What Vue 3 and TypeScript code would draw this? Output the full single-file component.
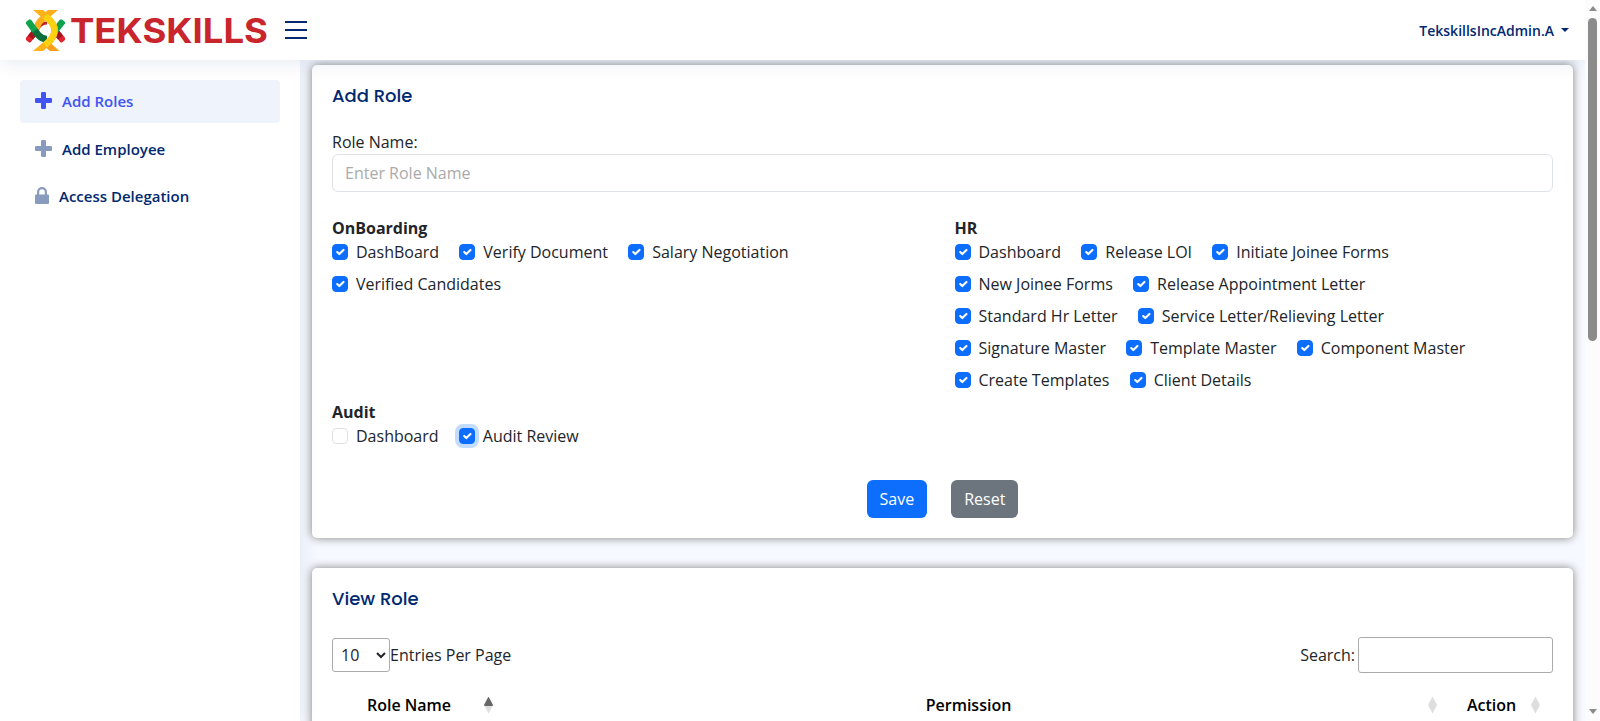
<script setup lang="ts">
import { ref } from 'vue'

interface Permission {
  label: string
  checked: boolean
  focused?: boolean
}
interface Group {
  title: string
  items: Permission[]
}

const on = (label: string): Permission => ({ label, checked: true })

const groups = ref<Group[]>([
  {
    title: 'OnBoarding',
    items: ['DashBoard', 'Verify Document', 'Salary Negotiation', 'Verified Candidates'].map(on),
  },
  {
    title: 'HR',
    items: [
      'Dashboard', 'Release LOI', 'Initiate Joinee Forms', 'New Joinee Forms',
      'Release Appointment Letter', 'Standard Hr Letter', 'Service Letter/Relieving Letter',
      'Signature Master', 'Template Master', 'Component Master', 'Create Templates', 'Client Details',
    ].map(on),
  },
  {
    title: 'Audit',
    items: [
      { label: 'Dashboard', checked: false },
      { label: 'Audit Review', checked: true, focused: true },
    ],
  },
])

const menu = [
  { label: 'Add Roles', icon: 'plus', active: true },
  { label: 'Add Employee', icon: 'plus', active: false },
  { label: 'Access Delegation', icon: 'lock', active: false },
]

const roleName = ref('')
const search = ref('')
const pageSize = ref('10')
</script>

<template>
  <div class="window">
    <div class="page">
      <header class="header">
        <div class="brand">
          <svg class="emblem" viewBox="2 1 39 41" width="39" height="41" fill="none" stroke-width="6.5">
            <defs>
              <clipPath id="sides"><path d="M2 13 5 10.500H38L41 13V31L38 33.500H5L2 31z" /></clipPath>
            </defs>
            <g clip-path="url(#sides)">
              <path d="M1 35 11 23M42 35 32 23" stroke="#e0232e" />
              <path d="M6.500 28.500 11 23M36.500 28.500 32 23" stroke="#a3161f" />
              <path d="M42 8 31 22" stroke="#0fa34b" />
            </g>
            <path d="M14.500 18.500Q18 14 23 14" stroke="#c0202a" stroke-width="3" />
            <path d="M36 -5 19 9.500Q13 14 12.500 21" stroke="#fbae1c" />
            <path clip-path="url(#sides)" d="M1 8 12 23Q16 30 22 30" stroke="#0fa34b" />
            <path d="M11 21.500 13 24.500Q17 30 23 30" stroke="#0c6e3a" />
            <path d="M36 47 24 36" stroke="#f7a01b" />
            <path d="M7 -5 24 9.500Q30.500 15 30.500 21.500Q30.500 28 24 33.500L7 48" stroke="#fcb31a" />
            <path d="M21 7 24 9.500Q30.500 15 30.500 21.500Q30.500 28 24 33.500L21 36" stroke="#fdd010" />
          </svg>
          <svg class="wordmark" viewBox="0 0 200 32" width="200" height="32">
            <text x="1" y="29" textLength="198" lengthAdjust="spacingAndGlyphs">TEKSKILLS</text>
          </svg>
          <svg class="burger" viewBox="0 0 22 18" width="22" height="18">
            <path d="M0 1h22M0 9h22M0 17h22" stroke="#012970" stroke-width="2" />
          </svg>
        </div>
        <div class="user">TekskillsIncAdmin.A<i class="caret"></i></div>
      </header>

      <div class="body">
        <aside class="sidebar">
          <a v-for="m in menu" :key="m.label" class="nav-link" :class="[m.icon, { active: m.active }]">
            <svg v-if="m.icon === 'plus'" viewBox="0 0 17 17" width="17" height="17">
              <path d="M6 1.200Q6 0 7.200 0h2.600Q11 0 11 1.200V6h4.800Q17 6 17 7.200v2.600Q17 11 15.800 11H11v4.800Q11 17 9.800 17H7.200Q6 17 6 15.800V11H1.200Q0 11 0 9.800V7.200Q0 6 1.200 6H6z" fill="currentColor" />
            </svg>
            <svg v-else viewBox="0 0 14 17" width="14" height="17">
              <path d="M12.800 7.400H12V5A5 5 0 0 0 2 5v2.400h-.8Q0 7.400 0 8.600v7.200Q0 17 1.200 17h11.600q1.200 0 1.200-1.200V8.600q0-1.200-1.200-1.200zM4.200 7.400V5a2.800 2.800 0 0 1 5.600 0v2.400z" fill="currentColor" />
            </svg>
            <span>{{ m.label }}</span>
          </a>
        </aside>

        <main class="main">
          <section class="card">
            <h5 class="card-title">Add Role</h5>
            <label class="field-label">Role Name:</label>
            <input v-model="roleName" class="form-control" type="text" placeholder="Enter Role Name" />
            <div class="groups">
              <div v-for="g in groups" :key="g.title" class="group">
                <div class="group-title">{{ g.title }}</div>
                <div class="checks">
                  <label v-for="p in g.items" :key="p.label" class="check" @click="p.checked = !p.checked">
                    <span class="box" :class="{ checked: p.checked, focused: p.focused }">
                      <svg v-if="p.checked" viewBox="0 0 20 20" width="14" height="14">
                        <path d="m6 10 3 3 6-6" fill="none" stroke="#fff" stroke-width="3" stroke-linecap="round" stroke-linejoin="round" />
                      </svg>
                    </span>
                    <span>{{ p.label }}</span>
                  </label>
                </div>
              </div>
            </div>
            <div class="actions">
              <button class="btn save">Save</button>
              <button class="btn reset">Reset</button>
            </div>
          </section>

          <section class="card list">
            <h5 class="card-title">View Role</h5>
            <div class="toolbar">
              <div class="length">
                <select v-model="pageSize">
                  <option>10</option>
                  <option>25</option>
                  <option>50</option>
                </select>
                <span>Entries Per Page</span>
              </div>
              <div class="search">
                <span>Search:</span>
                <input v-model="search" type="search" />
              </div>
            </div>
            <div class="thead">
              <div class="th"><span>Role Name</span><i class="sort asc"></i></div>
              <div class="th"><span>Permission</span><i class="sort"></i></div>
              <div class="th"><span>Action</span><i class="sort"></i></div>
            </div>
          </section>
        </main>
      </div>
    </div>

    <div class="scrollbar">
      <i class="up"></i>
      <i class="thumb"></i>
      <i class="down"></i>
    </div>
  </div>
</template>

<style>
body {
  background: #f6f9ff;
  overflow: hidden;
}
</style>

<style scoped>
* {
  box-sizing: border-box;
}
.window {
  display: flex;
  width: 1600px;
  height: 721px;
  overflow: hidden;
  background: #f6f9ff;
  font: 16px/24px "Open Sans", "Noto Sans", sans-serif;
  color: #212529;
}
.page {
  width: 1585px;
  height: 721px;
  display: flex;
  flex-direction: column;
  overflow: hidden;
}
.header {
  position: relative;
  z-index: 3;
  flex: none;
  height: 60px;
  display: flex;
  align-items: center;
  justify-content: space-between;
  padding: 0 16px 0 26px;
  background: #fff;
  box-shadow: 0 2px 20px rgba(1, 41, 112, 0.1);
}
.brand {
  display: flex;
  align-items: center;
}
.emblem {
  margin-top: 1px;
}
.wordmark {
  margin: 0 16px 0 4px;
  overflow: visible;
}
.wordmark text {
  font: 700 34px "Inter", sans-serif;
  fill: #c9252c;
}
.user {
  display: flex;
  align-items: center;
  padding-top: 1px;
  font-size: 14px;
  font-weight: 600;
  color: #012970;
}
.caret {
  margin: -1px 0 0 7px;
  border: 4px solid transparent;
  border-top-color: #012970;
  border-bottom: 0;
}
.body {
  flex: 1;
  min-height: 0;
  display: flex;
}
.sidebar {
  position: relative;
  z-index: 2;
  flex: none;
  width: 300px;
  padding: 20px;
  background: #fff;
  box-shadow: 0 0 20px rgba(1, 41, 112, 0.1);
}
.nav-link {
  display: flex;
  align-items: center;
  height: 42.500px;
  margin-bottom: 5px;
  padding: 0 15px;
  border-radius: 4px;
  font-size: 15px;
  font-weight: 600;
  color: #012970;
}
.nav-link svg {
  margin: -1px 10px 0 0;
  color: #899bbd;
}
.nav-link.active {
  background: #eef3fc;
  color: #4154f1;
}
.nav-link.active svg {
  color: #4154f1;
}
.main {
  flex: 1;
  min-width: 0;
  padding: 5px 12px 0;
}
.card {
  padding: 20px;
  background: #fff;
  border-radius: 5px;
  box-shadow: 0 0 10px gray;
  margin-bottom: 30px;
}
.card-title {
  height: 45px;
  margin: 0;
  font: 500 18px/21.600px "Poppins", "Inter", sans-serif;
  color: #012970;
}
.field-label {
  display: block;
}
.form-control {
  display: block;
  width: 100%;
  height: 38px;
  padding: 6px 12px;
  border: 1px solid #dee2e6;
  border-radius: 6px;
  background: #fff;
  font: inherit;
  color: inherit;
}
.form-control::placeholder {
  color: #aaa;
  opacity: 1;
}
.groups {
  display: grid;
  grid-template-columns: 1fr 1fr;
  column-gap: 24px;
  margin-top: 24px;
}
.group-title {
  font-weight: 700;
}
.checks {
  display: flex;
  flex-wrap: wrap;
}
.check {
  display: flex;
  height: 32px;
  margin-right: 20.200px;
  white-space: nowrap;
}
.box {
  width: 16px;
  height: 16px;
  margin: 4px 8px 0 0;
  border: 1px solid #dee2e6;
  border-radius: 4px;
}
.box svg {
  display: block;
}
.box.checked {
  background: #0d6efd;
  border-color: #0d6efd;
}
.box.focused {
  box-shadow: 0 0 0 4px rgba(13, 110, 253, 0.25);
}
.actions {
  display: flex;
  justify-content: center;
  gap: 24px;
  margin-top: 24px;
}
.btn {
  height: 38px;
  padding: 0 13px;
  border: 0;
  border-radius: 6px;
  font: inherit;
  color: #fff;
}
.save {
  background: #0d6efd;
}
.reset {
  background: #6c757d;
}
.list {
  height: 400px;
}
.toolbar {
  display: flex;
  justify-content: space-between;
  align-items: center;
  height: 36px;
  margin-top: 4px;
}
.length,
.search {
  display: flex;
  align-items: center;
}
.length select {
  width: 58px;
  height: 34px;
  padding: 4px;
  border: 1px solid #aaa;
  border-radius: 3px;
  background: transparent;
  font: inherit;
  color: inherit;
}
.search input {
  width: 195px;
  height: 36px;
  margin-left: 3px;
  padding: 5px;
  border: 1px solid #aaa;
  border-radius: 3px;
  background: transparent;
  font: inherit;
}
.thead {
  display: grid;
  grid-template-columns: 173px 943px 103px;
  height: 64px;
  font-weight: 600;
  color: #000;
}
.th {
  display: flex;
  align-items: center;
  padding: 0 12px 0 2px;
}
.th:nth-child(n + 2) {
  padding: 0 11px 0 4px;
}
.th span {
  flex: 1;
  text-align: center;
}
.sort {
  width: 9px;
  height: 17px;
  background: #dedede;
  clip-path: polygon(50% 0, 100% 50%, 50% 100%, 0 50%);
}
.sort.asc {
  background: linear-gradient(#666 50%, #dedede 50%);
}
.scrollbar {
  width: 15px;
  height: 721px;
  display: flex;
  flex-direction: column;
  align-items: center;
  background: #fcfcfc;
}
.up,
.down {
  border: 4.500px solid transparent;
}
.up {
  margin-top: 6px;
  border-top: 0;
  border-bottom: 5px solid #8b8b8b;
}
.thumb {
  width: 9px;
  height: 323px;
  margin-top: 7px;
  border-radius: 5px;
  background: #8b8b8b;
}
.down {
  margin: auto 0 7px;
  border-bottom: 0;
  border-top: 5px solid #8b8b8b;
}
</style>
